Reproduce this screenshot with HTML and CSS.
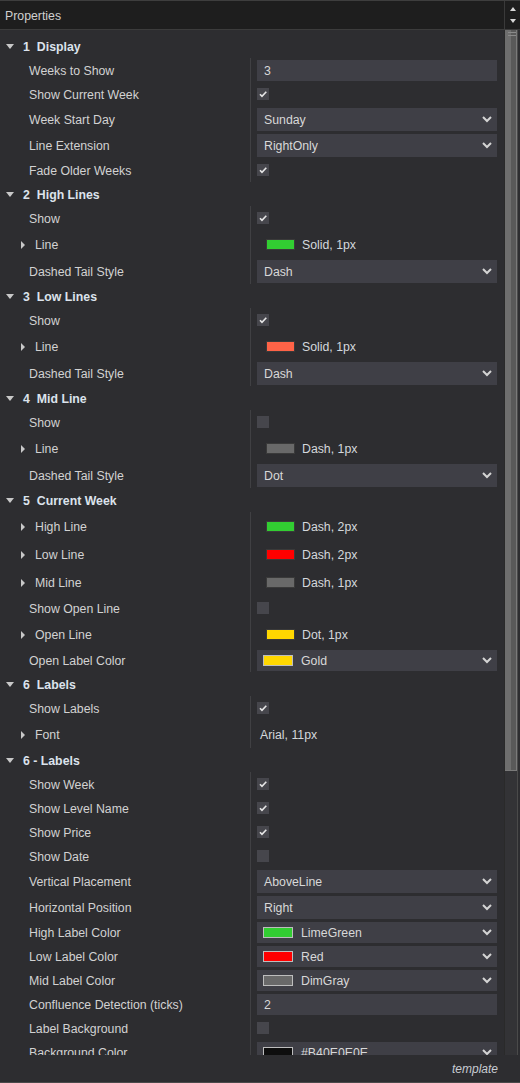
FILE: index.html
```html
<!DOCTYPE html>
<html>
<head>
<meta charset="utf-8">
<link rel="stylesheet" href="styles.css">
</head>
<body>
<div class="frame">
  <div class="titlebar">
    <div class="title">Properties</div>
    <div class="tb-scroll"><span class="tri-up"></span><span class="tri-down"></span></div>
  </div>
  <div class="main">
    <div class="content">
      <!-- 1 Display -->
      <div class="sec"><span class="tdown"></span><span class="num">1</span>Display</div>
      <div class="group">
        <div class="row h24"><div class="lbl">Weeks to Show</div><div class="val"><div class="inp">3</div></div></div>
        <div class="row h24"><div class="lbl">Show Current Week</div><div class="val"><span class="cb on"><svg viewBox="0 0 12 12"><polyline points="3,6.2 5,8.4 9.3,3.8"/></svg></span></div></div>
        <div class="row h26"><div class="lbl">Week Start Day</div><div class="val"><div class="dd"><span class="ddt">Sunday</span><svg class="chev" viewBox="0 0 10 7"><polyline points="1,1 5,5 9,1"/></svg></div></div></div>
        <div class="row h26"><div class="lbl">Line Extension</div><div class="val"><div class="dd"><span class="ddt">RightOnly</span><svg class="chev" viewBox="0 0 10 7"><polyline points="1,1 5,5 9,1"/></svg></div></div></div>
        <div class="row h24"><div class="lbl">Fade Older Weeks</div><div class="val"><span class="cb on"><svg viewBox="0 0 12 12"><polyline points="3,6.2 5,8.4 9.3,3.8"/></svg></span></div></div>
      </div>
      <!-- 2 High Lines -->
      <div class="sec"><span class="tdown"></span><span class="num">2</span>High Lines</div>
      <div class="group">
        <div class="row h24"><div class="lbl">Show</div><div class="val"><span class="cb on"><svg viewBox="0 0 12 12"><polyline points="3,6.2 5,8.4 9.3,3.8"/></svg></span></div></div>
        <div class="row h28"><div class="lbl sub"><span class="tright"></span>Line</div><div class="val"><span class="lsw" style="background:#32cd32"></span><span class="ltx">Solid, 1px</span></div></div>
        <div class="row h26"><div class="lbl">Dashed Tail Style</div><div class="val"><div class="dd"><span class="ddt">Dash</span><svg class="chev" viewBox="0 0 10 7"><polyline points="1,1 5,5 9,1"/></svg></div></div></div>
      </div>
      <!-- 3 Low Lines -->
      <div class="sec"><span class="tdown"></span><span class="num">3</span>Low Lines</div>
      <div class="group">
        <div class="row h24"><div class="lbl">Show</div><div class="val"><span class="cb on"><svg viewBox="0 0 12 12"><polyline points="3,6.2 5,8.4 9.3,3.8"/></svg></span></div></div>
        <div class="row h28"><div class="lbl sub"><span class="tright"></span>Line</div><div class="val"><span class="lsw" style="background:#ff6347"></span><span class="ltx">Solid, 1px</span></div></div>
        <div class="row h26"><div class="lbl">Dashed Tail Style</div><div class="val"><div class="dd"><span class="ddt">Dash</span><svg class="chev" viewBox="0 0 10 7"><polyline points="1,1 5,5 9,1"/></svg></div></div></div>
      </div>
      <!-- 4 Mid Line -->
      <div class="sec"><span class="tdown"></span><span class="num">4</span>Mid Line</div>
      <div class="group">
        <div class="row h24"><div class="lbl">Show</div><div class="val"><span class="cb"></span></div></div>
        <div class="row h28"><div class="lbl sub"><span class="tright"></span>Line</div><div class="val"><span class="lsw" style="background:#696969"></span><span class="ltx">Dash, 1px</span></div></div>
        <div class="row h26"><div class="lbl">Dashed Tail Style</div><div class="val"><div class="dd"><span class="ddt">Dot</span><svg class="chev" viewBox="0 0 10 7"><polyline points="1,1 5,5 9,1"/></svg></div></div></div>
      </div>
      <!-- 5 Current Week -->
      <div class="sec"><span class="tdown"></span><span class="num">5</span>Current Week</div>
      <div class="group">
        <div class="row h28"><div class="lbl sub"><span class="tright"></span>High Line</div><div class="val"><span class="lsw" style="background:#32cd32"></span><span class="ltx">Dash, 2px</span></div></div>
        <div class="row h28"><div class="lbl sub"><span class="tright"></span>Low Line</div><div class="val"><span class="lsw" style="background:#ff0000"></span><span class="ltx">Dash, 2px</span></div></div>
        <div class="row h28"><div class="lbl sub"><span class="tright"></span>Mid Line</div><div class="val"><span class="lsw" style="background:#696969"></span><span class="ltx">Dash, 1px</span></div></div>
        <div class="row h24"><div class="lbl">Show Open Line</div><div class="val"><span class="cb"></span></div></div>
        <div class="row h28"><div class="lbl sub"><span class="tright"></span>Open Line</div><div class="val"><span class="lsw" style="background:#ffd700"></span><span class="ltx">Dot, 1px</span></div></div>
        <div class="row h24"><div class="lbl">Open Label Color</div><div class="val"><div class="dd clr"><span class="csw" style="background:#ffd700"></span><span class="ctx">Gold</span><svg class="chev" viewBox="0 0 10 7"><polyline points="1,1 5,5 9,1"/></svg></div></div></div>
      </div>
      <!-- 6 Labels -->
      <div class="sec"><span class="tdown"></span><span class="num">6</span>Labels</div>
      <div class="group">
        <div class="row h24"><div class="lbl">Show Labels</div><div class="val"><span class="cb on"><svg viewBox="0 0 12 12"><polyline points="3,6.2 5,8.4 9.3,3.8"/></svg></span></div></div>
        <div class="row h28"><div class="lbl sub"><span class="tright"></span>Font</div><div class="val"><span class="ftx">Arial, 11px</span></div></div>
      </div>
      <!-- 6 - Labels -->
      <div class="sec"><span class="tdown"></span>6 - Labels</div>
      <div class="group">
        <div class="row h24"><div class="lbl">Show Week</div><div class="val"><span class="cb on"><svg viewBox="0 0 12 12"><polyline points="3,6.2 5,8.4 9.3,3.8"/></svg></span></div></div>
        <div class="row h24"><div class="lbl">Show Level Name</div><div class="val"><span class="cb on"><svg viewBox="0 0 12 12"><polyline points="3,6.2 5,8.4 9.3,3.8"/></svg></span></div></div>
        <div class="row h24"><div class="lbl">Show Price</div><div class="val"><span class="cb on"><svg viewBox="0 0 12 12"><polyline points="3,6.2 5,8.4 9.3,3.8"/></svg></span></div></div>
        <div class="row h24"><div class="lbl">Show Date</div><div class="val"><span class="cb"></span></div></div>
        <div class="row h26"><div class="lbl">Vertical Placement</div><div class="val"><div class="dd"><span class="ddt">AboveLine</span><svg class="chev" viewBox="0 0 10 7"><polyline points="1,1 5,5 9,1"/></svg></div></div></div>
        <div class="row h26"><div class="lbl">Horizontal Position</div><div class="val"><div class="dd"><span class="ddt">Right</span><svg class="chev" viewBox="0 0 10 7"><polyline points="1,1 5,5 9,1"/></svg></div></div></div>
        <div class="row h24"><div class="lbl">High Label Color</div><div class="val"><div class="dd clr"><span class="csw" style="background:#32cd32"></span><span class="ctx">LimeGreen</span><svg class="chev" viewBox="0 0 10 7"><polyline points="1,1 5,5 9,1"/></svg></div></div></div>
        <div class="row h24"><div class="lbl">Low Label Color</div><div class="val"><div class="dd clr"><span class="csw" style="background:#ff0000"></span><span class="ctx">Red</span><svg class="chev" viewBox="0 0 10 7"><polyline points="1,1 5,5 9,1"/></svg></div></div></div>
        <div class="row h24"><div class="lbl">Mid Label Color</div><div class="val"><div class="dd clr"><span class="csw" style="background:#696969"></span><span class="ctx">DimGray</span><svg class="chev" viewBox="0 0 10 7"><polyline points="1,1 5,5 9,1"/></svg></div></div></div>
        <div class="row h24"><div class="lbl">Confluence Detection (ticks)</div><div class="val"><div class="inp">2</div></div></div>
        <div class="row h24"><div class="lbl">Label Background</div><div class="val"><span class="cb"></span></div></div>
        <div class="row h24"><div class="lbl">Background Color</div><div class="val"><div class="dd clr"><span class="csw" style="background:#0e0e0e"></span><span class="ctx">#B40E0E0E</span><svg class="chev" viewBox="0 0 10 7"><polyline points="1,1 5,5 9,1"/></svg></div></div></div>
      </div>
    </div>
    <div class="vscroll">
      <div class="thumb"><span class="grip"></span><span class="grip"></span></div>
    </div>
  </div>
  <div class="footer"><span class="tmpl">template</span></div>
</div>
</body>
</html>
```
FILE: styles.css
```css
html, body {
  margin: 0;
  padding: 0;
}
body {
  width: 520px;
  height: 1083px;
  overflow: hidden;
  background: #2d2d30;
  font-family: "Liberation Sans", Arial, sans-serif;
  font-size: 12.3px;
  color: #d2d2d2;
}
.frame {
  width: 520px;
  height: 1083px;
  display: flex;
  flex-direction: column;
  border-top: 1px solid #3e3e3e;
  box-sizing: border-box;
}
.titlebar {
  height: 28px;
  background: #1e1e1e;
  border-bottom: 1px solid #3c3c3c;
  display: flex;
  align-items: stretch;
  flex: none;
}
.title {
  flex: 1;
  padding-left: 5px;
  padding-top: 2px;
  box-sizing: border-box;
  display: flex;
  align-items: center;
  color: #d0d0d0;
}
.tb-scroll {
  width: 15px;
  border-left: 1px solid #3a3a3a;
  display: flex;
  flex-direction: column;
  align-items: center;
  justify-content: center;
  gap: 8px;
}
.tri-up {
  width: 0; height: 0;
  border-left: 3.5px solid transparent;
  border-right: 3.5px solid transparent;
  border-bottom: 4px solid #d8d8d8;
}
.tri-down {
  width: 0; height: 0;
  border-left: 3.5px solid transparent;
  border-right: 3.5px solid transparent;
  border-top: 4px solid #d8d8d8;
}
.main {
  height: 1025px;
  display: flex;
  flex: none;
  overflow: hidden;
}
.content {
  width: 504px;
  padding-top: 4px;
  overflow: hidden;
}
.sec {
  height: 24px;
  padding-top: 2px;
  box-sizing: border-box;
  display: flex;
  align-items: center;
  font-weight: bold;
  color: #dce3ec;
}
.tdown {
  width: 0; height: 0;
  margin-left: 6px;
  margin-right: 9px;
  margin-bottom: 1px;
  border-left: 4px solid transparent;
  border-right: 4px solid transparent;
  border-top: 5px solid #c8c8c8;
}
.num {
  margin-right: 7px;
}
.group {
  display: flex;
  flex-direction: column;
}
.row {
  display: grid;
  grid-template-columns: 250px 1fr;
}
.h24 { height: 24px; }
.h26 { height: 26px; }
.h28 { height: 28px; }
.lbl {
  padding-left: 29px;
  padding-top: 2px;
  box-sizing: border-box;
  display: flex;
  align-items: center;
  white-space: nowrap;
  color: #d2d2d2;
}
.lbl.sub {
  padding-left: 21px;
}
.tright {
  width: 0; height: 0;
  margin-right: 10px;
  margin-bottom: 1px;
  border-top: 4px solid transparent;
  border-bottom: 4px solid transparent;
  border-left: 4px solid #c8c8c8;
}
.val {
  border-left: 1px solid #404043;
  padding-left: 6px;
  padding-right: 7px;
  display: flex;
  align-items: center;
  white-space: nowrap;
}
.inp {
  height: 21px;
  width: 100%;
  background: #3f3f46;
  padding-left: 7px;
  padding-top: 2px;
  box-sizing: border-box;
  display: flex;
  align-items: center;
  color: #d8d8d8;
}
.dd {
  height: 23px;
  width: 100%;
  background: #3f3f46;
  padding-left: 7px;
  padding-right: 5px;
  box-sizing: border-box;
  display: flex;
  align-items: center;
  color: #d8d8d8;
}
.dd.clr {
  height: 21px;
  padding-left: 6px;
}
.ddt, .ctx {
  flex: 1;
  padding-top: 2px;
}
.chev {
  width: 10px;
  height: 7px;
  fill: none;
  stroke: #d4d4d4;
  stroke-width: 2;
}
.csw {
  width: 30px;
  height: 11px;
  box-sizing: border-box;
  border: 1px solid #bdbdbd;
  margin-right: 8px;
  flex: none;
}
.lsw {
  width: 29px;
  height: 11px;
  box-sizing: border-box;
  border: 1px solid #3a3a3a;
  margin-left: 9px;
  margin-right: 7px;
  flex: none;
}
.ltx {
  color: #d4d8dc;
  padding-top: 2px;
}
.ftx {
  padding-left: 3px;
  padding-top: 2px;
  color: #d4d8dc;
}
.cb {
  width: 12px;
  height: 12px;
  background: #46464c;
  display: block;
}
.cb svg {
  width: 12px;
  height: 12px;
  display: block;
  fill: none;
  stroke: #e6e6e6;
  stroke-width: 1.6;
}
.vscroll {
  width: 14px;
  background: #333336;
  border-left: 1px solid #2a2a2a;
  border-right: 1px solid #4a4a4a;
  box-sizing: border-box;
  flex: none;
  height: 1025px;
}
.thumb {
  height: 741px;
  background: linear-gradient(to right, #6e6e6e 0, #6e6e6e 6px, #595959 6px, #595959 100%);
  border-right: 1px solid #7a7a7a;
  border-bottom: 1px solid #7a7a7a;
  box-sizing: border-box;
  padding-top: 2px;
  display: flex;
  flex-direction: column;
  align-items: center;
  gap: 2px;
}
.grip {
  width: 8px;
  height: 1px;
  background: #8a8a8a;
  margin-left: 2px;
}
.footer {
  flex: none;
  height: 28px;
  border-bottom: 1px solid #4a4a4a;
  box-sizing: border-box;
  display: flex;
  align-items: center;
  justify-content: flex-end;
  padding-right: 22px;
}
.tmpl {
  font-style: italic;
  color: #c8ccd2;
  font-size: 12px;
}
```
